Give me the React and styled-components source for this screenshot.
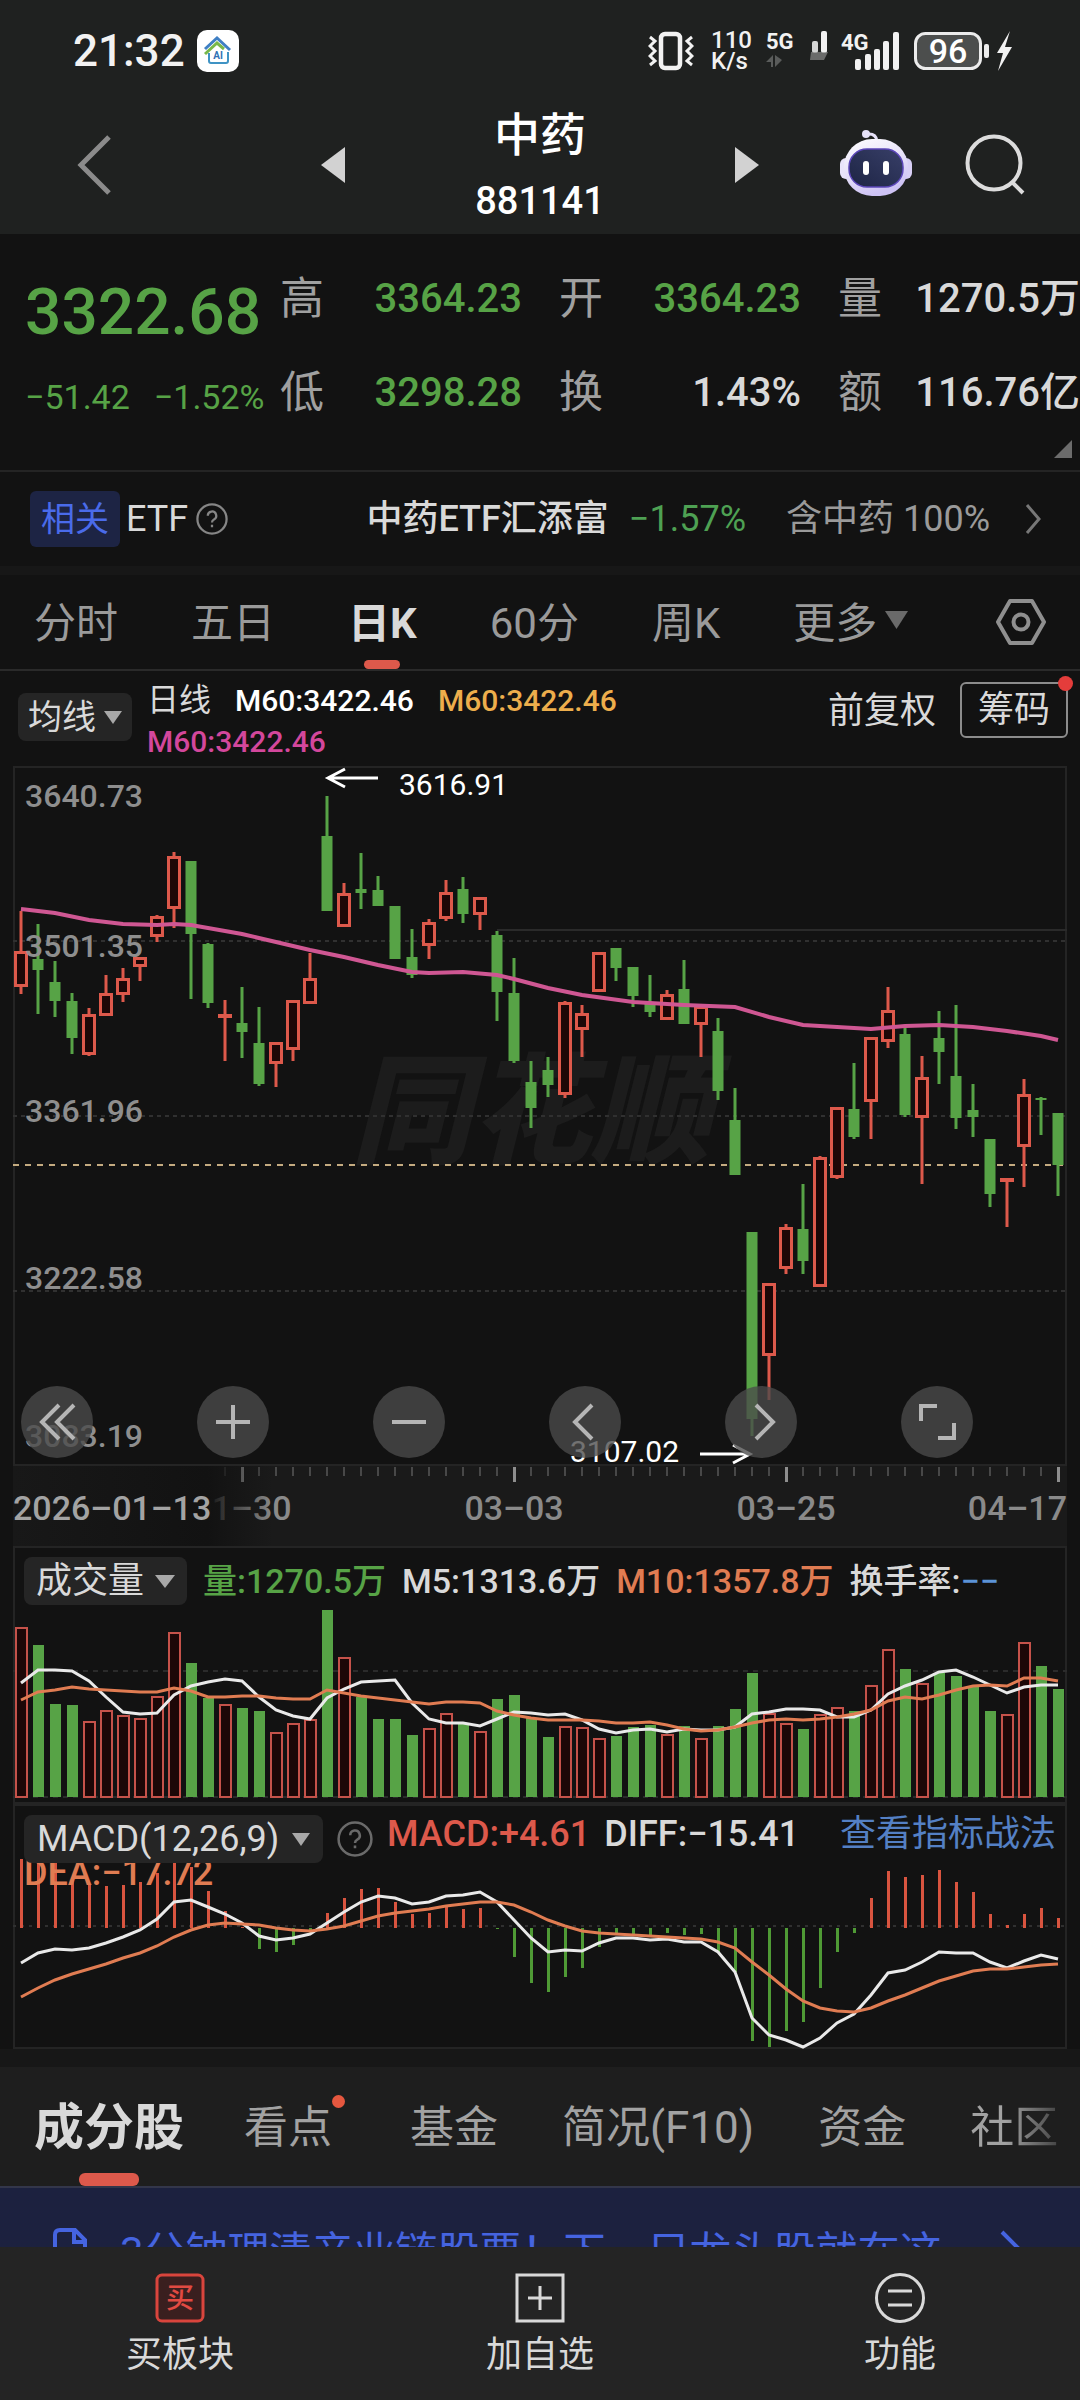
import React from 'react';
import styled, { createGlobalStyle, css } from 'styled-components';

const colors = {
  bg: '#121212',
  header: '#1f2120',
  panel: '#1e1e1e',
  line: '#242424',
  text: '#d9d9d9',
  muted: '#9a9a9a',
  green: '#57a346',
  red: '#dd594b',
  orange: '#e07c52',
  yellow: '#edae4c',
  pink: '#d3479c',
  blue: '#5480c4'
};

const GlobalStyle = createGlobalStyle`
  * {
    box-sizing: border-box;
  }

  body {
    margin: 0;
    background: ${colors.bg};
    color: ${colors.text};
    font-family: Roboto, 'Noto Sans CJK SC', sans-serif;
  }

  button,
  select {
    margin: 0;
    padding: 0;
    border: 0;
    background: none;
    color: inherit;
    font: inherit;
    cursor: pointer;
  }

  a {
    color: inherit;
    text-decoration: none;
  }

  svg {
    display: block;
    flex: none;
  }
`

const Screen = styled.div`
  display: flex;
  flex-direction: column;
  height: 100vh;
  overflow: hidden;
`

const Content = styled.main`
  flex: 1;
  min-height: 0;
  overflow: hidden;
`

/* ---------- header ---------- */

const Header = styled.header`
  background: ${colors.header};
  padding-bottom: 6px;
`

const StatusBar = styled.div`
  display: flex;
  align-items: center;
  justify-content: space-between;
  height: 96px;
  padding: 6px 68px 0 73px;
  color: #f2f2f2;
`

const StatusGroup = styled.div`
  display: flex;
  align-items: center;
  gap: ${props => props.gap}px;
`

const Clock = styled.span`
  font-size: 44px;
  font-weight: 500;
  line-height: 48px;
`

const NetSpeed = styled.span`
  width: 42px;
  margin-left: 4px;
  font-size: 24px;
  font-weight: 500;
  line-height: 21px;
`

const NavBar = styled.div`
  display: grid;
  grid-template-columns: 1fr 438px 1fr;
  align-items: center;
  height: 132px;
`

const NavSide = styled.div`
  display: flex;
  align-items: center;
  gap: 52px;
  justify-content: ${props => (props.end ? 'flex-end' : 'flex-start')};
  padding: ${props => (props.end ? '0 54px 0 0' : '0 0 0 76px')};
`

const NavCenter = styled.div`
  display: flex;
  align-items: center;
  justify-content: space-between;
`

const Title = styled.h1`
  margin: 0;
  padding-top: 6px;
  text-align: center;
  color: #fff;
  font-size: 46px;
  font-weight: 500;
  line-height: 66px;
`

const TitleCode = styled.span`
  display: block;
  font-size: 38px;
  line-height: 66px;
`

/* ---------- quote ---------- */

const Quote = styled.section`
  position: relative;
  display: flex;
  padding: 18px 0 30px;
  border-bottom: 2px solid ${colors.line};
`

const QuoteMain = styled.div`
  flex: 0 0 280px;
  padding: 14px 0 0 25px;
  color: ${colors.green};
  white-space: nowrap;
`

const Price = styled.div`
  font-size: 64px;
  font-weight: 500;
  line-height: 94px;
`

const Change = styled.div`
  display: flex;
  gap: 24px;
  font-size: 34px;
  line-height: 74px;
`

const Stats = styled.dl`
  flex: 1;
  display: grid;
  grid-template-columns: repeat(3, 1fr);
  column-gap: 37px;
  margin: 0;
`

const Stat = styled.div`
  display: flex;
  justify-content: space-between;
  line-height: 94px;
  white-space: nowrap;

  dt {
    color: #a0a0a0;
    font-size: 44px;
  }

  dd {
    margin: 0;
    color: ${props => (props.down ? colors.green : colors.text)};
    font-size: 40px;
    font-weight: 500;
  }
`

const ExpandCorner = styled.button`
  position: absolute;
  right: 8px;
  bottom: 12px;
`

const Related = styled.a`
  display: flex;
  align-items: center;
  height: 94px;
  padding: 0 38px 0 30px;
  font-size: 36px;
  line-height: 56px;
  white-space: nowrap;
`

const RelatedTag = styled.span`
  margin-right: 6px;
  padding: 0 11px;
  border-radius: 6px;
  background: #1d2444;
  color: #4a6bea;
  font-size: 34px;
`

const RelatedLabel = styled.span`
  margin-right: 8px;
`

const RelatedName = styled.span`
  margin-left: auto;
  font-weight: 500;
`

const RelatedChange = styled.span`
  margin: 0 40px 0 20px;
  color: #4ea153;
`

const RelatedShare = styled.span`
  margin-right: 34px;
  color: ${colors.muted};
`

const Divider = styled.div`
  height: ${props => props.size}px;
  background: #171717;
`

/* ---------- period tabs ---------- */

const PeriodTabs = styled.nav`
  display: flex;
  align-items: center;
  gap: 73px;
  height: 96px;
  padding: 0 34px;
  border-bottom: 2px solid #2a2a2a;
`

const activeMark = css`
  color: ${colors.text};
  font-weight: 700;

  &:after {
    content: '';
    position: absolute;
    left: 50%;
    bottom: 0;
    width: ${props => props.mark}px;
    height: ${props => props.mark / 6 + 3}px;
    margin-left: -${props => props.mark / 2}px;
    border-radius: 6px;
    background: ${colors.red};
  }
`

const PeriodTab = styled.button`
  position: relative;
  display: flex;
  align-items: center;
  gap: 8px;
  height: 100%;
  padding-bottom: 5px;
  color: ${colors.muted};
  font-size: 42px;
  white-space: nowrap;

  ${props => (props.$active ? activeMark : null)}
`

const SettingsButton = styled.button`
  margin-left: auto;
`

/* ---------- chart headers ---------- */

const ChartHeader = styled.div`
  display: flex;
  align-items: flex-start;
  height: 95px;
  padding: 9px 12px 0 18px;
`

const Picker = styled.label`
  position: relative;
  flex: none;
  display: flex;
  align-items: center;
  height: 48px;
  padding: 0 ${props => props.pad}px;
  border-radius: 8px;
  background: #252525;
  font-size: ${props => props.size}px;
  margin-top: ${props => props.drop || 0}px;

  select {
    appearance: none;
    outline: none;
    line-height: 48px;
    margin-right: ${props => props.space}px;
  }
`

const Legend = styled.div`
  flex: 1;
  display: flex;
  flex-wrap: wrap;
  column-gap: 24px;
  margin: 0 40px 0 15px;
  font-size: 30px;
  font-weight: 500;
  line-height: 41px;
`

const LegendItem = styled.span`
  color: ${props => props.color || colors.text};
  font-size: ${props => (props.large ? '32px' : 'inherit')};
  font-weight: ${props => (props.large ? 400 : 500)};
  line-height: ${props => (props.tight ? '20px' : 'inherit')};
  white-space: nowrap;
`

const AdjustButton = styled.button`
  margin-right: 24px;
  font-size: 36px;
  line-height: 62px;
`

const ChipButton = styled.button`
  position: relative;
  height: 56px;
  margin-top: 2px;
  padding: 0 16px;
  border: 2px solid #8c8c8c;
  border-radius: 6px;
  font-size: 36px;
  line-height: 48px;

  &:after {
    content: '';
    position: absolute;
    top: -8px;
    right: -7px;
    width: 15px;
    height: 15px;
    border-radius: 50%;
    background: #e43d3b;
  }
`

const Panel = styled.section`
  position: relative;
  display: grid;
  margin: 0 13px;
  box-shadow: inset 0 0 0 2px ${colors.line};

  > * {
    grid-area: 1 / 1;
  }

  > svg {
    width: 100%;
    height: auto;
  }
`

const AxisPanel = styled(Panel)`
  background: #1a1a1a;
  box-shadow: none;
`

const Controls = styled.div`
  position: absolute;
  left: 8px;
  bottom: 8px;
  display: flex;
  gap: 104px;
`

const RoundButton = styled.button`
  display: flex;
  align-items: center;
  justify-content: center;
  width: 72px;
  height: 72px;
  border-radius: 50%;
  background: rgba(74, 74, 74, 0.78);
`

const PanelHeader = styled.div`
  z-index: 1;
  align-self: start;
  display: flex;
  align-items: flex-start;
  flex-wrap: ${props => (props.$wrap ? 'wrap' : 'nowrap')};
  column-gap: ${props => props.gap}px;
  padding: 11px 11px 0;
  font-size: ${props => props.size}px;
  line-height: ${props => props.line}px;
`

const HelpButton = styled.button`
  margin-top: 6px;
`

const StrategyLink = styled.a`
  margin-left: auto;
  color: ${colors.blue};
`

const LegendBreak = styled.div`
  flex-basis: 100%;
`

/* ---------- lower part ---------- */

const SectionTabs = styled.nav`
  display: flex;
  align-items: center;
  gap: 64px;
  height: 121px;
  padding-left: 34px;
  overflow: hidden;
  background: ${colors.panel};
  border-bottom: 2px solid #33364a;
`

const SectionTab = styled.a`
  position: relative;
  flex: none;
  height: 119px;
  padding-top: 2px;
  margin-left: ${props => (props.$dot ? -4 : 0)}px;
  padding-right: ${props => (props.$dot ? 14 : 0)}px;
  color: #a2a2a2;
  font-size: ${props => (props.$active ? 50 : 44)}px;
  line-height: 119px;
  white-space: nowrap;

  ${props => (props.$active ? activeMark : null)}

  ${props =>
    props.$dot
      ? `
      &:before {
        content: '';
        position: absolute;
        top: 28px;
        right: 1px;
        width: 13px;
        height: 13px;
        border-radius: 50%;
        background: #e5573f;
      }
    `
      : null}

  ${props =>
    props.$fade
      ? `
      color: transparent;
      background: linear-gradient(90deg, #a2a2a2 40%, #444);
      background-clip: text;
    `
      : null}
`

const Banner = styled.a`
  display: flex;
  align-items: center;
  height: 120px;
  padding: 0 58px 0 52px;
  background: #1c213f;
  color: #4564e0;
  font-size: 42px;
  white-space: nowrap;

  span {
    flex: 1;
    margin-left: 32px;
  }
`

const BottomBar = styled.footer`
  display: grid;
  grid-template-columns: repeat(3, 1fr);
  height: 153px;
  padding-top: 26px;
  background: #242424;
`

const BottomButton = styled.button`
  display: flex;
  flex-direction: column;
  align-items: center;
  gap: 6px;
  font-size: 36px;
  line-height: 52px;
`

/* ---------- data ---------- */

const stats = [
  { label: '高', value: '3364.23', down: true },
  { label: '开', value: '3364.23', down: true },
  { label: '量', value: '1270.5万' },
  { label: '低', value: '3298.28', down: true },
  { label: '换', value: '1.43%' },
  { label: '额', value: '116.76亿' }
];

// [rising, high, body top, body bottom, low]
const candles = [
  [1, 145, 185, 221, 228], [0, 158, 193, 204, 248], [0, 195, 216, 235, 251], [0, 227, 235, 272, 288],
  [1, 242, 248, 289, 290], [1, 209, 227, 250, 250], [1, 202, 212, 229, 236], [1, 191, 191, 201, 215],
  [1, 149, 150, 171, 176], [1, 86, 90, 143, 162], [0, 95, 95, 168, 233], [0, 177, 178, 237, 242],
  [1, 234, 248, 252, 295], [0, 221, 257, 266, 292], [0, 241, 277, 318, 320], [1, 276, 276, 298, 321],
  [1, 234, 234, 284, 295], [1, 187, 212, 238, 238], [0, 30, 70, 145, 145], [1, 117, 127, 161, 161],
  [0, 87, 123, 127, 143], [0, 110, 124, 140, 140], [0, 140, 140, 193, 193], [0, 163, 191, 209, 212],
  [1, 153, 156, 180, 193], [1, 114, 126, 153, 155], [0, 111, 123, 148, 157], [1, 131, 131, 149, 164],
  [0, 165, 169, 226, 255], [0, 192, 227, 295, 297], [0, 295, 316, 342, 362], [0, 291, 304, 319, 331],
  [1, 235, 236, 329, 332], [1, 239, 247, 264, 291], [1, 186, 186, 226, 226], [0, 182, 182, 202, 215],
  [0, 201, 201, 230, 241], [0, 209, 238, 246, 251], [1, 224, 228, 254, 254], [0, 194, 223, 258, 258],
  [1, 240, 240, 259, 291], [0, 252, 265, 325, 334], [0, 322, 354, 409, 409], [0, 466, 466, 653, 670],
  [1, 517, 517, 590, 634], [1, 458, 461, 503, 508], [0, 418, 463, 495, 508], [1, 390, 391, 521, 521],
  [1, 341, 341, 412, 413], [0, 297, 343, 371, 373], [1, 271, 271, 336, 373], [1, 221, 244, 276, 282],
  [0, 261, 268, 349, 351], [1, 290, 311, 352, 418], [0, 245, 272, 286, 318], [0, 239, 310, 352, 363],
  [0, 318, 344, 351, 371], [0, 373, 373, 428, 441], [1, 412, 412, 416, 461], [1, 313, 328, 381, 421],
  [0, 331, 332, 334, 369], [0, 347, 347, 399, 430]
];

// [index, y]
const average = [
  [0, 143], [2, 147], [4, 154], [6, 158], [8, 159], [9, 158], [10, 159], [13, 168], [15, 176], [17, 184],
  [19, 191], [21, 199], [23, 206], [24, 207], [26, 206], [28, 209], [29, 213], [31, 222], [33, 229],
  [36, 236], [38, 238], [39, 239], [42, 241], [44, 251], [46, 259], [48, 261], [50, 263], [52, 260],
  [54, 259], [56, 261], [58, 265], [60, 270], [61, 274]
];

const volumes = [
  81, 99, 158, 159, 175, 164, 169, 172, 150, 86, 117, 152, 158, 162, 165, 186, 177, 173, 64, 111, 151,
  173, 173, 189, 182, 167, 177, 185, 153, 149, 172, 191, 180, 181, 192, 190, 181, 179, 188, 180, 192,
  180, 163, 127, 167, 177, 183, 168, 161, 165, 139, 103, 123, 137, 127, 130, 141, 165, 168, 96, 120, 143
];

const volumeM5 = [
  137, 124, 124, 125, 135, 151, 166, 168, 167, 149, 140, 136, 133, 135, 151, 164, 170, 173, 152, 143,
  136, 135, 134, 157, 173, 177, 177, 180, 173, 166, 167, 169, 168, 174, 183, 187, 184, 183, 186, 183,
  184, 184, 181, 168, 166, 163, 163, 164, 171, 171, 164, 148, 140, 134, 126, 124, 131, 139, 147, 141,
  139, 139
];

const volumeM10 = [
  154, 146, 144, 141, 143, 144, 145, 146, 146, 142, 145, 151, 151, 150, 150, 152, 153, 153, 144, 147,
  150, 152, 154, 156, 158, 156, 156, 157, 165, 169, 172, 174, 174, 174, 175, 177, 177, 176, 179, 183,
  185, 184, 181, 177, 174, 173, 174, 173, 171, 168, 164, 155, 151, 153, 149, 144, 140, 139, 140, 132,
  132, 135
];

const macd = [
  55, 55, 56, 75, 81, 82, 81, 78, 69, 54, 63, 87, 107, 123, 145, 148, 141, 129, 109, 94, 85, 84, 98,
  110, 109, 103, 105, 104, 125, 153, 179, 188, 173, 164, 143, 131, 130, 131, 129, 131, 130, 149, 168,
  237, 243, 227, 218, 184, 148, 129, 94, 67, 73, 71, 66, 78, 88, 110, 121, 110, 104, 114
];

const diff = [
  159, 149, 145, 146, 144, 139, 133, 126, 115, 98, 96, 103, 110, 119, 132, 136, 134, 130, 119, 108, 98,
  92, 94, 100, 98, 92, 91, 88, 98, 116, 134, 148, 146, 147, 139, 134, 134, 136, 135, 138, 138, 148, 168,
  214, 231, 236, 243, 234, 219, 210, 191, 169, 166, 158, 148, 149, 149, 158, 164, 157, 151, 155
];

const dea = [
  193, 184, 176, 170, 165, 160, 154, 149, 142, 133, 126, 121, 119, 120, 121, 124, 126, 127, 125, 122,
  117, 112, 109, 107, 105, 102, 100, 98, 98, 101, 108, 116, 122, 127, 129, 130, 131, 132, 133, 134, 135,
  138, 144, 158, 171, 185, 197, 204, 207, 208, 204, 197, 191, 184, 177, 172, 167, 165, 165, 163, 161, 160
];

const priceLabels = [
  ['3640.73', 41],
  ['3501.35', 191],
  ['3361.96', 356],
  ['3222.58', 523],
  ['3083.19', 681]
];

const STEP = 17;
const ZERO = 124;
const barX = i => 8 + i * STEP;
const toPoints = list =>
  list.map((p, i) => (Array.isArray(p) ? `${barX(p[0])},${p[1]}` : `${barX(i)},${p}`)).join(' ');

/* ---------- icons ---------- */

const Caret = ({ width = 18, height = 13, color = '#a8a8a8' }) => (
  <svg width={width} height={height} viewBox="0 0 18 13" preserveAspectRatio="none" aria-hidden="true">
    <path d="M0 0h18L9 13z" fill={color} />
  </svg>
);

const Question = ({ size, color }) => (
  <svg width={size} height={size} viewBox="0 0 34 34" fill="none" stroke={color} strokeWidth="2.4" aria-hidden="true">
    <circle cx="17" cy="17" r="15.5" />
    <path d="M12.5 13.5a4.5 4.5 0 1 1 6.6 4c-1.5.8-2.1 1.6-2.1 3.2M17 23.2v2.6" />
  </svg>
);

const Chevron = ({ width, height, color, stroke, left }) => (
  <svg width={width} height={height} viewBox={`0 0 ${width} ${height}`} fill="none" aria-hidden="true">
    <path
      d={
        left
          ? `M${width - stroke} ${stroke}L${stroke} ${height / 2}L${width - stroke} ${height - stroke}`
          : `M${stroke} ${stroke}L${width - stroke} ${height / 2}L${stroke} ${height - stroke}`
      }
      stroke={color}
      strokeWidth={stroke}
    />
  </svg>
);

const HomeAppIcon = () => (
  <svg width="42" height="42" viewBox="0 0 42 42" aria-hidden="true">
    <rect width="42" height="42" rx="10" fill="#fff" />
    <path d="M8 19L20 8l13 12" fill="none" stroke="#3f7fc4" strokeWidth="3" />
    <path d="M8 24l12-11 7 6" fill="none" stroke="#79b84a" strokeWidth="3" />
    <path d="M12 23v8q0 2 2 2h15q2 0 2-2v-9" fill="none" stroke="#3f93c4" strokeWidth="2" />
    <text x="21" y="29" textAnchor="middle" fontSize="10" fontWeight="700" fill="#3272b5">AI</text>
  </svg>
);

const VibrateIcon = () => (
  <svg width="46" height="40" viewBox="0 0 46 40" fill="none" stroke="#f2f2f2" aria-hidden="true">
    <rect x="13" y="3" width="19" height="34" rx="4" strokeWidth="4.500" />
    <path d="M2 6l5 4-5 5 5 5-5 5 5 5-5 4" strokeWidth="3" />
    <path d="M44 6l-5 4 5 5-5 5 5 5-5 5 5 4" strokeWidth="3" />
  </svg>
);

const Signal5G = () => (
  <svg width="62" height="42" viewBox="0 0 62 42" aria-hidden="true">
    <text x="0" y="19" fontSize="22" fontWeight="700" fill="#f2f2f2">5G</text>
    <path d="M7 25v12h-2v-5H0zM9 25v12l7-7z" fill="#5a5c5b" />
    <rect x="46" y="11" width="6" height="12" rx="2" fill="#d5d6d5" />
    <rect x="55" y="1" width="6" height="22" rx="2" fill="#f2f2f2" />
    <path d="M45 22h17l-4 8H44z" fill="#8a8c8a" opacity="0.7" />
  </svg>
);

const Signal4G = () => (
  <svg width="60" height="40" viewBox="0 0 60 40" fill="#f2f2f2" aria-hidden="true">
    <text x="0" y="19" fontSize="22" fontWeight="700">4G</text>
    <rect x="14" y="28" width="6" height="11" rx="2" />
    <rect x="24" y="23" width="6" height="16" rx="2" />
    <rect x="33" y="18" width="6" height="21" rx="2" />
    <rect x="42" y="10" width="6" height="29" rx="2" />
    <rect x="52" y="1" width="6" height="38" rx="2" />
  </svg>
);

const BatteryIcon = () => (
  <svg width="98" height="40" viewBox="0 0 98 40" aria-hidden="true">
    <rect x="1.5" y="2.5" width="65" height="35" rx="10" fill="#4c4e4d" stroke="#ececec" strokeWidth="3" />
    <text x="34" y="32" textAnchor="middle" fontSize="34" fontWeight="500" fill="#fff">96</text>
    <rect x="70" y="13" width="5" height="14" rx="2" fill="#ececec" />
    <path d="M96 0L83 22h6l-5 18 14-24h-7z" fill="#f2f2f2" />
  </svg>
);

const RobotIcon = () => (
  <svg width="72" height="70" viewBox="0 0 72 70" aria-hidden="true">
    <defs>
      <linearGradient id="shell" x1="0" y1="0" x2="0.4" y2="1">
        <stop offset="0" stopColor="#fff" />
        <stop offset="0.6" stopColor="#e4def8" />
        <stop offset="1" stopColor="#cdc2f4" />
      </linearGradient>
      <linearGradient id="visor" x1="1" y1="0" x2="0" y2="1">
        <stop offset="0" stopColor="#383f68" />
        <stop offset="1" stopColor="#1d2444" />
      </linearGradient>
    </defs>
    <path d="M27 4q9-1 10 7" fill="none" stroke="#e6e1f8" strokeWidth="3" />
    <circle cx="26" cy="4" r="4" fill="#e6e1f8" />
    <rect x="0" y="28" width="12" height="21" rx="6" fill="#e9e4fa" />
    <rect x="60" y="28" width="12" height="21" rx="6" fill="#d8cff5" />
    <rect x="4" y="9" width="64" height="57" rx="28" fill="url(#shell)" />
    <rect x="9" y="19" width="54" height="38" rx="18" fill="url(#visor)" stroke="#5b46b8" strokeWidth="1.5" />
    <rect x="23" y="31" width="6" height="14" rx="3" fill="#fff" />
    <rect x="43" y="31" width="6" height="14" rx="3" fill="#fff" />
  </svg>
);

const SearchIcon = () => (
  <svg width="62" height="62" viewBox="0 0 62 62" fill="none" stroke="#dcdcdc" strokeWidth="4" aria-hidden="true">
    <circle cx="30" cy="29" r="26.5" />
    <path d="M48 48l11 11" />
  </svg>
);

const HexIcon = () => (
  <svg width="50" height="48" viewBox="0 0 50 48" fill="none" stroke="#8f8f8f" strokeWidth="4" strokeLinejoin="round" aria-hidden="true">
    <path d="M14 3h22l12 21-12 21H14L2 24z" />
    <circle cx="25" cy="24" r="7.5" />
  </svg>
);

const controls = [
  ['快退', 'M32 13L15 30l17 17M47 13L30 30l17 17'],
  ['放大', 'M30 13v34M13 30h34'],
  ['缩小', 'M13 30h34'],
  ['左移', 'M37 13L20 30l17 17'],
  ['右移', 'M25 13l17 17-17 17'],
  ['全屏', 'M14 29V14h16M47 31v15H31']
];

/* ---------- charts ---------- */

const CandleChart = () => (
  <svg viewBox="0 0 1054 700" role="img" aria-label="日K线图">
    <text x="338" y="388" fontSize="120" fontWeight="900" fontStyle="italic" fill="#1c1c1c">同花顺</text>
    <g stroke="#303030" strokeWidth="2">
      <path d="M484 164H1054" stroke="#2a2a2a" />
      <path d="M0 175H1054M0 350H1054M0 525H1054" strokeDasharray="4 4" />
    </g>
    <path d="M0 399H1054" stroke="#c4ab80" strokeWidth="2" strokeDasharray="6 6" />
    {candles.map(([up, high, top, bottom, low], i) => {
      const x = barX(i);
      return up ? (
        <g key={i} stroke={colors.red} strokeWidth="3">
          <path d={`M${x} ${high}V${top}M${x} ${bottom}V${low}`} />
          <rect x={x - 5.5} y={top + 1.5} width="11" height={Math.max(bottom - top - 3, 1)} fill="#1c0707" />
        </g>
      ) : (
        <g key={i} fill={colors.green}>
          <rect x={x - 1.5} y={high} width="3" height={low - high} />
          <rect x={x - 5.5} y={top} width="11" height={bottom - top} />
        </g>
      );
    })}
    <polyline points={toPoints(average)} fill="none" stroke="#cf5793" strokeWidth="4" />
    <g fill="#8e8e8e" fontSize="32" fontWeight="500">
      {priceLabels.map(([label, y]) => (
        <text key={label} x="12" y={y}>{label}</text>
      ))}
    </g>
    <g fill="#fff" fontSize="30">
      <text x="386" y="29">3616.91</text>
      <text x="557" y="696">3107.02</text>
    </g>
    <path d="M365 12H315M332 3L315 12l17 9M687 688h50M720 679l17 9-17 9" fill="none" stroke="#fff" strokeWidth="3" />
  </svg>
);

const DateAxis = () => (
  <svg viewBox="0 0 1054 80" role="img" aria-label="日期">
    <defs>
      <linearGradient id="fade">
        <stop offset="0" stopColor="#181818" />
        <stop offset="0.75" stopColor="#121212" />
        <stop offset="0.8" stopColor="#121212" stopOpacity="0.75" />
        <stop offset="1" stopColor="#121212" stopOpacity="0" />
      </linearGradient>
    </defs>
    {candles.map((candle, i) => {
      const major = i % 16 === 13;
      return (
        <rect
          key={i}
          x={barX(i) - 1}
          y="1"
          width={major ? 3 : 2}
          height={major ? 15 : 9}
          fill={major ? '#8e8e8e' : '#484848'}
        />
      );
    })}
    <g fill="#8a8a8a" fontSize="34" fontWeight="500" textAnchor="middle">
      <text x="229" y="54">01–30</text>
      <text x="501" y="54">03–03</text>
      <text x="773" y="54">03–25</text>
      <text x="1054" y="54" textAnchor="end">04–17</text>
    </g>
    <rect width="260" height="80" fill="url(#fade)" />
    <text x="0" y="54" fontSize="34" fontWeight="500" fill="#a3a3a3">2026–01–13</text>
  </svg>
);

const VolumeChart = () => (
  <svg viewBox="0 0 1054 258" role="img" aria-label="成交量图">
    <path d="M0 125H1054M0 251H1054" stroke="#2b2b2b" strokeWidth="2" strokeDasharray="5 5" />
    {volumes.map((y, i) =>
      candles[i][0] ? (
        <rect key={i} x={barX(i) - 5} y={y + 1} width="11" height={250 - y} fill="#1c0707" stroke="#c5524a" strokeWidth="2" />
      ) : (
        <rect key={i} x={barX(i) - 5} y={y} width="11" height={251 - y} fill={colors.green} />
      )
    )}
    <g fill="none" strokeWidth="3">
      <polyline points={toPoints(volumeM5)} stroke="#e9e9e9" />
      <polyline points={toPoints(volumeM10)} stroke={colors.orange} />
    </g>
  </svg>
);

const MacdChart = () => (
  <svg viewBox="0 0 1054 245" role="img" aria-label="MACD图">
    <path d="M0 122H1054" stroke="#303030" strokeWidth="2" strokeDasharray="3 5" />
    {macd.map((y, i) => (
      <rect
        key={i}
        x={barX(i) - 1}
        y={Math.min(y, ZERO)}
        width="3"
        height={Math.abs(y - ZERO)}
        fill={y < ZERO ? '#d8543f' : '#4f9a35'}
      />
    ))}
    <g fill="none" strokeWidth="3">
      <polyline points={toPoints(diff)} stroke="#e9e9e9" />
      <polyline points={toPoints(dea)} stroke={colors.orange} />
    </g>
  </svg>
);

class App extends React.Component {
  render() {
    return (
      <Screen>
        <GlobalStyle />
        <Header>
          <StatusBar>
            <StatusGroup gap={12}>
              <Clock>21:32</Clock>
              <HomeAppIcon />
            </StatusGroup>
            <StatusGroup gap={13}>
              <VibrateIcon />
              <NetSpeed>110 K/s</NetSpeed>
              <Signal5G />
              <Signal4G />
              <BatteryIcon />
            </StatusGroup>
          </StatusBar>
          <NavBar>
            <NavSide>
              <button aria-label="返回">
                <Chevron left width={38} height={66} color="#8b8b8b" stroke={5} />
              </button>
            </NavSide>
            <NavCenter>
              <button aria-label="上一个">
                <svg width="24" height="36" viewBox="0 0 24 36"><path d="M24 0v36L0 18z" fill="#d2d2d2" /></svg>
              </button>
              <Title>
                中药
                <TitleCode>881141</TitleCode>
              </Title>
              <button aria-label="下一个">
                <svg width="24" height="36" viewBox="0 0 24 36"><path d="M0 0v36l24-18z" fill="#d2d2d2" /></svg>
              </button>
            </NavCenter>
            <NavSide end>
              <button aria-label="智能助手"><RobotIcon /></button>
              <button aria-label="搜索"><SearchIcon /></button>
            </NavSide>
          </NavBar>
        </Header>

        <Content>
          <Quote>
            <QuoteMain>
              <Price>3322.68</Price>
              <Change>
                <span>−51.42</span>
                <span>−1.52%</span>
              </Change>
            </QuoteMain>
            <Stats>
              {stats.map(({ label, value, down }) => (
                <Stat key={label} down={down}>
                  <dt>{label}</dt>
                  <dd>{value}</dd>
                </Stat>
              ))}
            </Stats>
            <ExpandCorner aria-label="展开">
              <svg width="18" height="18" viewBox="0 0 18 18"><path d="M18 0v18H0z" fill="#6c6c6c" /></svg>
            </ExpandCorner>
          </Quote>

          <Related href="#etf">
            <RelatedTag>相关</RelatedTag>
            <RelatedLabel>ETF</RelatedLabel>
            <Question size={32} color="#868686" />
            <RelatedName>中药ETF汇添富</RelatedName>
            <RelatedChange>−1.57%</RelatedChange>
            <RelatedShare>含中药 100%</RelatedShare>
            <Chevron width={18} height={34} color="#777" stroke={3} />
          </Related>

          <Divider size={9} />

          <PeriodTabs>
            <PeriodTab>分时</PeriodTab>
            <PeriodTab>五日</PeriodTab>
            <PeriodTab $active mark={36}>日K</PeriodTab>
            <PeriodTab>60分</PeriodTab>
            <PeriodTab>周K</PeriodTab>
            <PeriodTab>
              更多
              <Caret width={23} height={18} color="#6a6a6a" />
            </PeriodTab>
            <SettingsButton aria-label="设置"><HexIcon /></SettingsButton>
          </PeriodTabs>

          <ChartHeader>
            <Picker size={34} pad={10} space={8} drop={13}>
              <select aria-label="主图指标"><option>均线</option></select>
              <Caret />
            </Picker>
            <Legend>
              <LegendItem large>日线</LegendItem>
              <LegendItem color="#fff">M60:3422.46</LegendItem>
              <LegendItem color={colors.yellow}>M60:3422.46</LegendItem>
              <LegendItem color={colors.pink}>M60:3422.46</LegendItem>
            </Legend>
            <AdjustButton>前复权</AdjustButton>
            <ChipButton>筹码</ChipButton>
          </ChartHeader>

          <Panel>
            <CandleChart />
            <Controls>
              {controls.map(([label, path]) => (
                <RoundButton key={label} aria-label={label}>
                  <svg width="60" height="60" viewBox="0 0 60 60" fill="none" stroke="#b5b5b5" strokeWidth="4">
                    <path d={path} />
                  </svg>
                </RoundButton>
              ))}
            </Controls>
          </Panel>
          <AxisPanel as="div">
            <DateAxis />
          </AxisPanel>

          <Panel>
            <VolumeChart />
            <PanelHeader size={34} gap={16} line={48}>
              <Picker size={36} pad={12} space={10}>
                <select aria-label="副图指标一"><option>成交量</option></select>
                <Caret width={20} />
              </Picker>
              <LegendItem color={colors.green}>量:1270.5万</LegendItem>
              <LegendItem>M5:1313.6万</LegendItem>
              <LegendItem color={colors.orange}>M10:1357.8万</LegendItem>
              <LegendItem>
                换手率:<LegendItem color="#5b93d6">−−</LegendItem>
              </LegendItem>
            </PanelHeader>
          </Panel>

          <Panel>
            <MacdChart />
            <PanelHeader size={36} gap={14} line={38} $wrap>
              <Picker size={36} pad={13} space={12}>
                <select aria-label="副图指标二"><option>MACD(12,26,9)</option></select>
                <Caret />
              </Picker>
              <HelpButton aria-label="指标说明"><Question size={36} color="#6a6a6a" /></HelpButton>
              <LegendItem color={colors.red}>MACD:+4.61</LegendItem>
              <LegendItem>DIFF:−15.41</LegendItem>
              <StrategyLink href="#strategy">查看指标战法</StrategyLink>
              <LegendBreak />
              <LegendItem color={colors.orange} tight="true">DEA:−17.72</LegendItem>
            </PanelHeader>
          </Panel>

          <Divider size={18} />

          <SectionTabs>
            <SectionTab href="#stocks" $active mark={60}>成分股</SectionTab>
            <SectionTab href="#views" $dot>看点</SectionTab>
            <SectionTab href="#funds">基金</SectionTab>
            <SectionTab href="#profile">简况(F10)</SectionTab>
            <SectionTab href="#capital">资金</SectionTab>
            <SectionTab href="#community" $fade>社区</SectionTab>
          </SectionTabs>

          <Banner href="#chain">
            <svg width="36" height="40" viewBox="0 0 36 40" fill="none" stroke="#4564e0" strokeWidth="4" aria-hidden="true">
              <path d="M23 2H8q-5 0-5 5v26q0 5 5 5h20q5 0 5-5V12zM22 3v11h11M11 23h14" />
            </svg>
            <span>3分钟理清产业链股票！下一只龙头股就在这</span>
            <Chevron width={24} height={40} color="#4564e0" stroke={4} />
          </Banner>
        </Content>

        <BottomBar>
          <BottomButton>
            <svg width="50" height="50" viewBox="0 0 50 50" aria-hidden="true">
              <rect x="2" y="2" width="46" height="46" rx="5" fill="#3a1f1f" stroke="#d9453d" strokeWidth="3" />
              <text x="25" y="35" textAnchor="middle" fontSize="28" fontWeight="500" fill="#e04a42">买</text>
            </svg>
            买板块
          </BottomButton>
          <BottomButton>
            <svg width="50" height="50" viewBox="0 0 50 50" fill="none" stroke="#d9d9d9" strokeWidth="3" aria-hidden="true">
              <path d="M2 2h46v46H2zM25 13v24M13 25h24" />
            </svg>
            加自选
          </BottomButton>
          <BottomButton>
            <svg width="52" height="50" viewBox="0 0 52 50" fill="none" stroke="#d9d9d9" strokeWidth="3" aria-hidden="true">
              <circle cx="26" cy="25" r="23.5" />
              <path d="M14 18h24M14 32h24" />
            </svg>
            功能
          </BottomButton>
        </BottomBar>
      </Screen>
    )
  }
}

export default App;
